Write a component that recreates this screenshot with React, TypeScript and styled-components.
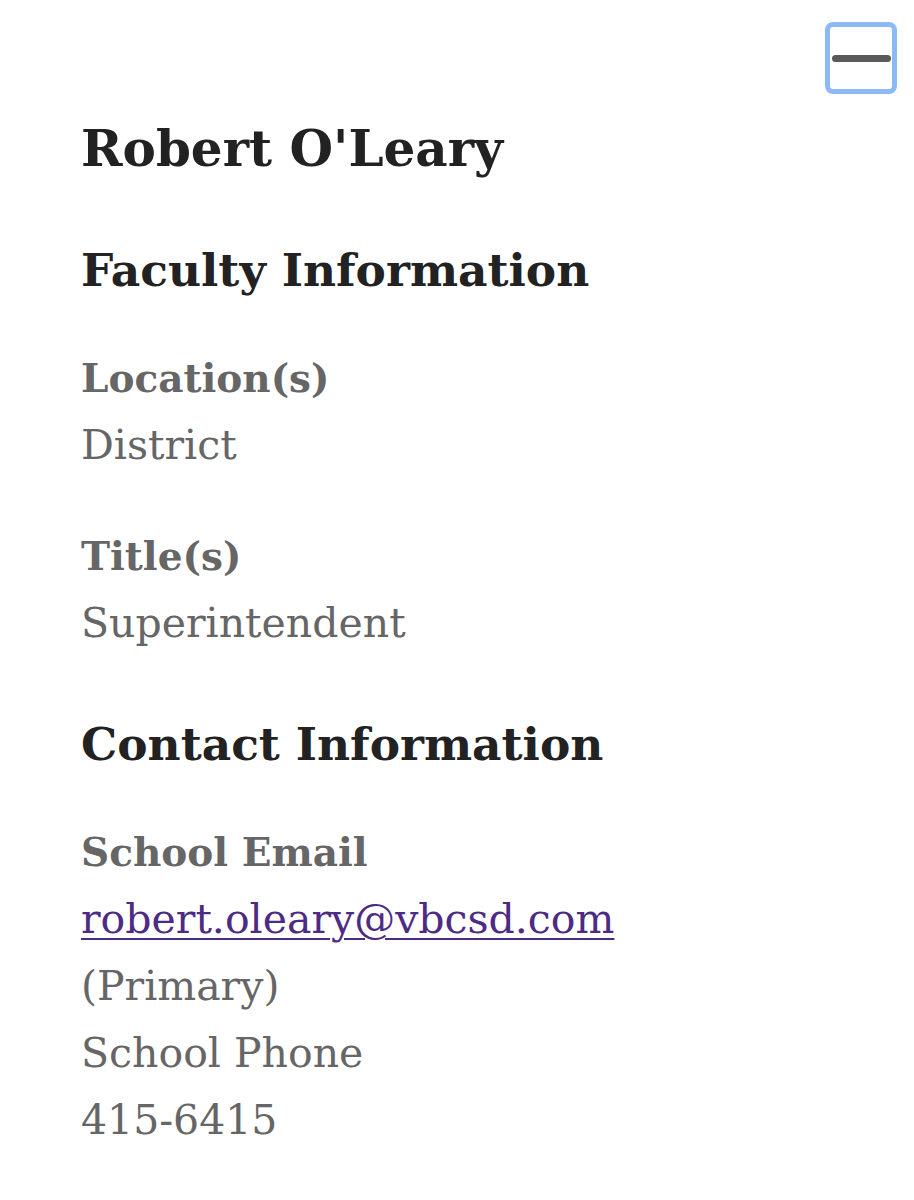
import styled, { createGlobalStyle } from 'styled-components'

const GlobalStyle = createGlobalStyle`
  html, body {
    margin: 0;
    padding: 0;
    background: #fff;
  }
  body {
    font-family: "DejaVu Serif", "Liberation Serif", serif;
  }
`

const Page = styled.div`
  position: relative;
  padding: 111px 81px 40px;
`

// collapsed nav toggle in the top right corner
const MenuToggle = styled.button`
  position: absolute;
  top: 22px;
  right: 17px;
  width: 72px;
  height: 72px;
  box-sizing: border-box;
  border: 5px solid #8cbaf6;
  border-radius: 8px;
  background: #fff;
  padding: 0;
  display: flex;
  align-items: center;
  justify-content: center;
`

const Bar = styled.span`
  display: block;
  width: 59px;
  height: 7px;
  border-radius: 4px;
  background: #5a5a5a;
`

const Name = styled.h1`
  margin: 0;
  font-size: 50px;
  line-height: 76px;
  font-weight: 700;
  color: #222;
`

const SectionTitle = styled.h2<{ $gap: number }>`
  margin: ${p => p.$gap}px 0 0;
  font-size: 45.5px;
  line-height: 70px;
  font-weight: 700;
  color: #222;
`

const Field = styled.dl<{ $gap?: number }>`
  margin: ${p => p.$gap ?? 40}px 0 0;
`

const Label = styled.dt`
  font-size: 39px;
  line-height: 67px;
  font-weight: 700;
  color: #666;
`

const Value = styled.dd`
  margin: 0;
  font-size: 41px;
  line-height: 67px;
  color: #666;
`

const MailLink = styled.a`
  color: #4d2b85;
  text-decoration: underline;
  text-decoration-thickness: 2px;
  text-underline-offset: 5px;
`

export default function App() {
  return (
    <>
      <GlobalStyle />
      <Page>
        <MenuToggle aria-label="Menu">
          <Bar />
        </MenuToggle>
        <Name>Robert O'Leary</Name>
        <SectionTitle $gap={48}>Faculty Information</SectionTitle>
        <Field>
          <Label>Location(s)</Label>
          <Value>District</Value>
        </Field>
        <Field $gap={44}>
          <Label>Title(s)</Label>
          <Value>Superintendent</Value>
        </Field>
        <SectionTitle $gap={52}>Contact Information</SectionTitle>
        <Field>
          <Label>School Email</Label>
          <Value>
            <MailLink href="mailto:robert.oleary@vbcsd.com">robert.oleary@vbcsd.com</MailLink>
          </Value>
          <Value>(Primary)</Value>
          <Value>School Phone</Value>
          <Value>415-6415</Value>
        </Field>
      </Page>
    </>
  )
}
